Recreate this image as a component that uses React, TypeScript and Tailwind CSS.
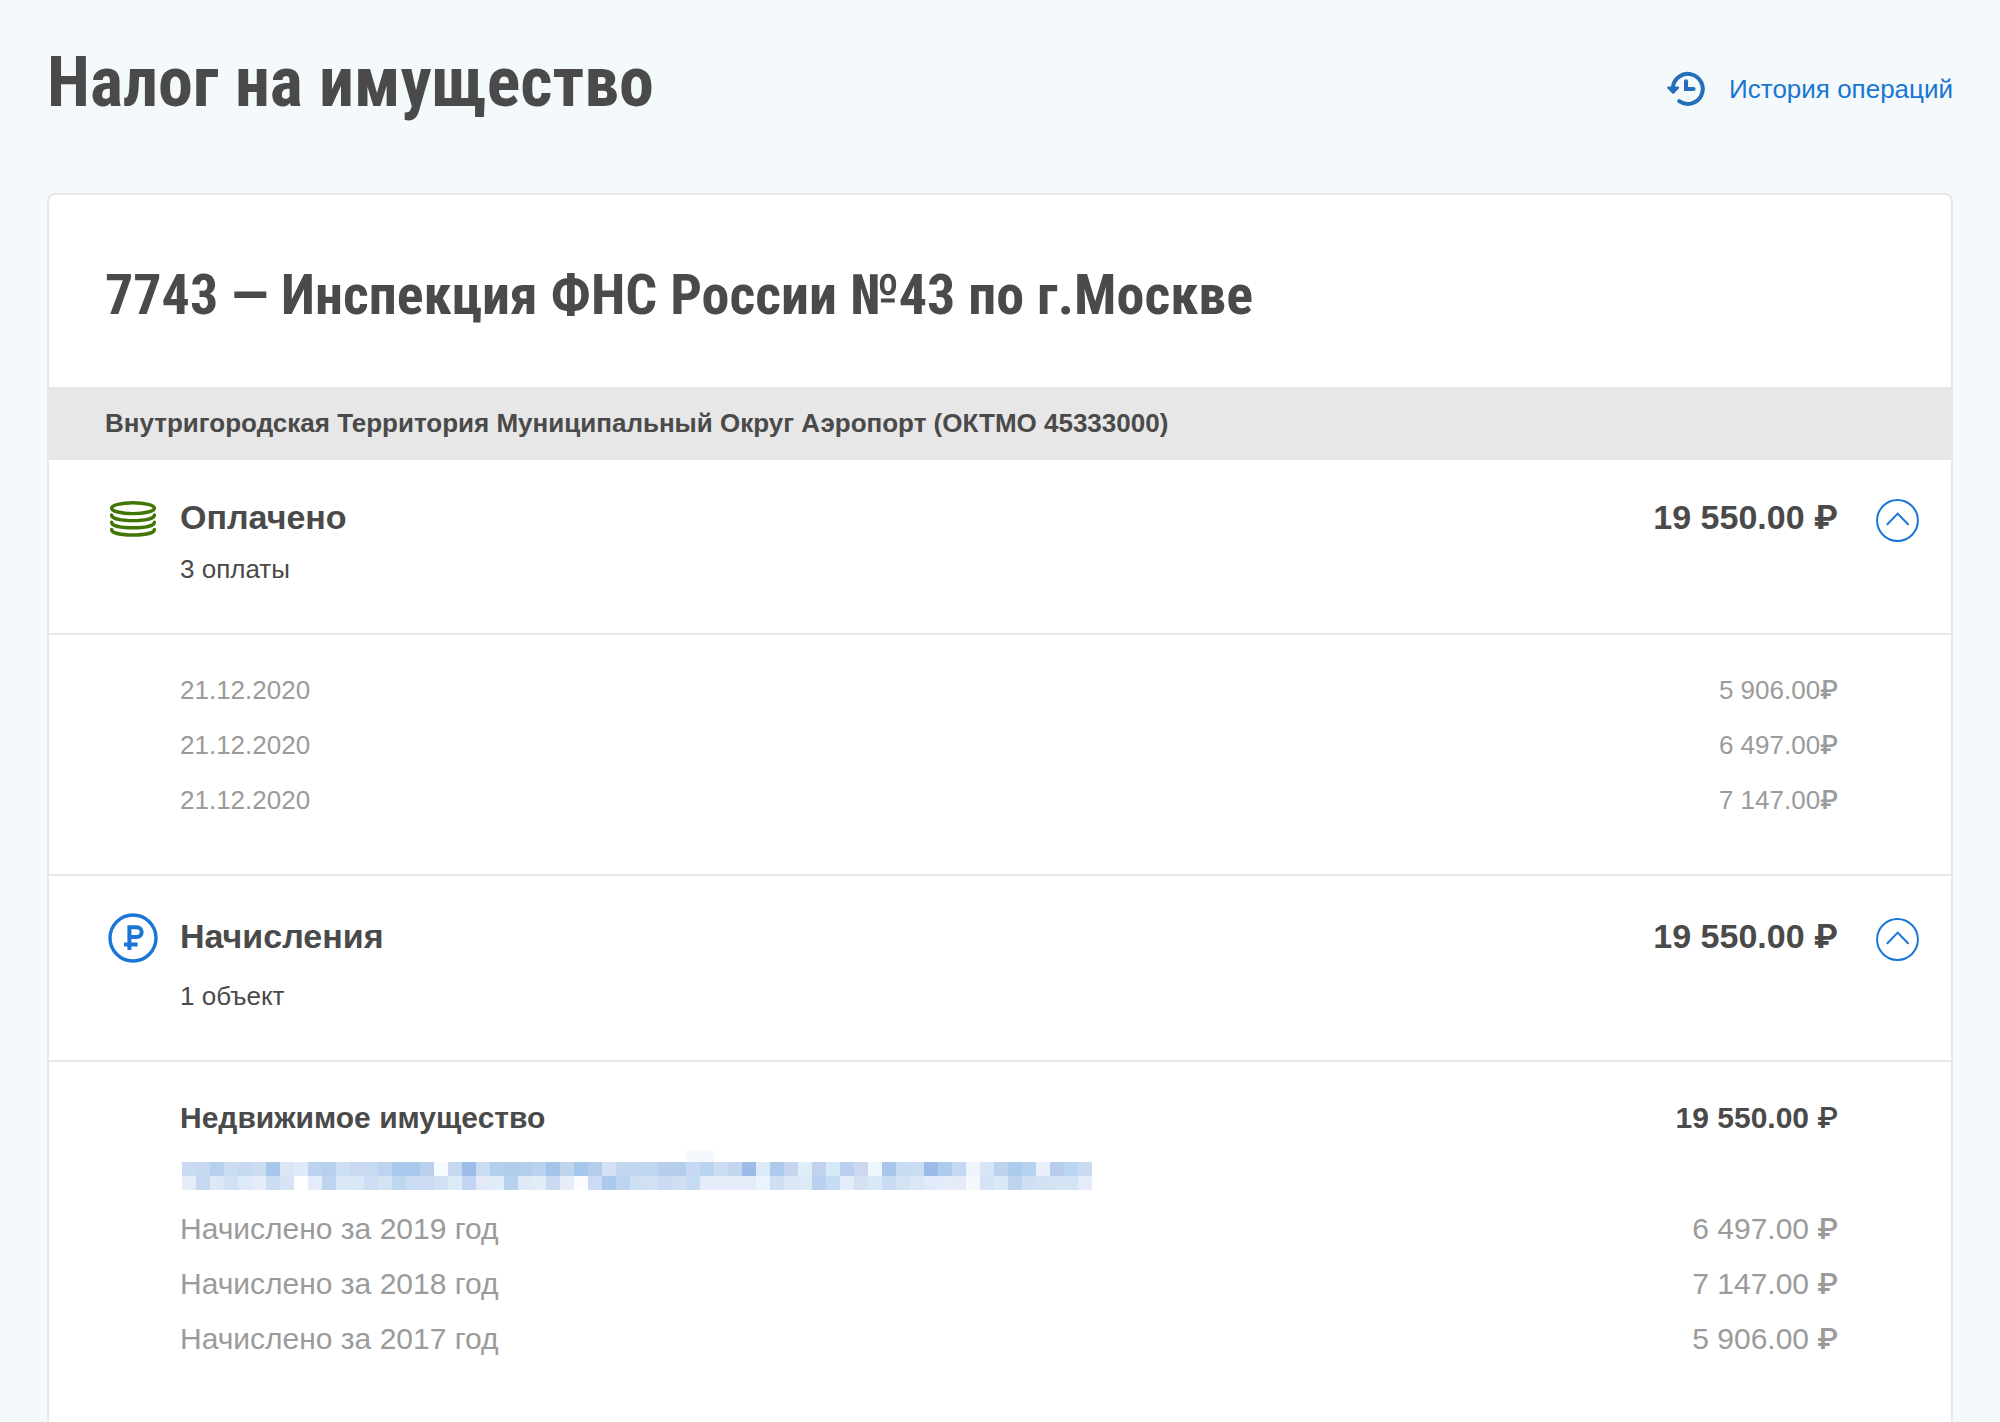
import React, { useState } from 'react';

interface Charge {
  label: string;
  amount: string;
}

const PAYMENTS: Charge[] = [
  { label: '21.12.2020', amount: '5 906.00' },
  { label: '21.12.2020', amount: '6 497.00' },
  { label: '21.12.2020', amount: '7 147.00' },
];

const CHARGES: Charge[] = [
  { label: 'Начислено за 2019 год', amount: '6 497.00' },
  { label: 'Начислено за 2018 год', amount: '7 147.00' },
  { label: 'Начислено за 2017 год', amount: '5 906.00' },
];

// Colours of the mosaic that hides the address, one hex per 14px cell
const MOSAIC_TOP =
  'c9daf1 c7d8f1 b6d1f0 c9dcf2 c7d8f1 ccdcf1 a7c7ed dae5f6 deeaf8 bdd2ef b6d0ed cddff4 c9daf0 c6daf2 bed3ef a9caed a9caed bad0ee f5fbff c6d7ef 9dbde9 cadcf3 b3cfee b0cdec b1ceed bad1ef a4c5ea c1d4ee a4c8ec b6ccec d4e1f5 c3d7ef c2d7ef bed7ee b7ceed b5ceed c5daf2 b8d4ef ccdcf2 c2d6ef 9cbce7 ddebf8 adc9ec c3d5ef dfedf8 c1d2ee d6e9f7 bbd0f0 cbd8f0 edf6fd a9c6eb c8dbf2 c9def3 9bbce8 adccec c5d8f1 eff4fb d6e6f7 bdd2ee adcbec b6d2f1 e9f0fb b8cdec b9d5f1 c9daf1'.split(' ');
const MOSAIC_BOTTOM =
  'e6edf9 c6d8f1 dce8f6 cfe1f2 dceaf8 e5ebf7 cbddf3 d6e3f5 ffffff e4ebf9 bed3f0 d9e7f7 d8e7f5 cdddf4 d2e3f4 bed6ee cbddf4 cadbf3 cfe1f2 dceaf5 c1d4f1 e4e9f7 e0ecf8 b7d2ee deeaf8 e1ecf6 c9dbf2 e6ecf9 fafcff cadbf3 abc9ec bdd4f0 cde0f4 d0e2f2 cbdaf2 cfe0f2 c5dbf2 e5ebf8 e5ebf8 e5ebf8 e5ebf8 eaf4fc cfe0f3 dae7f6 dee9f6 b9d0ef c5ddf4 e5ecf9 d5e0f2 d8e8f6 c9dbf2 d2e4f4 d8e6f6 e0eaf8 e5ebf8 e4ebf7 f5f9fe d5e4f4 d9e8f6 bdd3f0 d0e0f4 d4e1f3 d5e4f5 d3e4f5 e5ecf9'.split(' ');

const HistoryIcon: React.FC = () => (
  <svg width="38" height="36" viewBox="0 0 38 36" fill="none" aria-hidden="true" className="text-[#236fb8]">
    <path d="M5.8 17a15 15 0 1 1 6.4 13.2" stroke="currentColor" strokeWidth="4" strokeLinecap="round" />
    <path d="M1.4 16.6h9.6l-4.8 5z" fill="currentColor" stroke="currentColor" strokeWidth="2.4" strokeLinejoin="round" />
    <path d="M19 10.2v7.8h7.6" stroke="currentColor" strokeWidth="4" strokeLinecap="round" strokeLinejoin="miter" />
  </svg>
);

const CoinsIcon: React.FC = () => (
  <svg width="50" height="36" viewBox="0 0 50 36" fill="none" stroke="#417505" strokeWidth="3.4" strokeLinecap="round" aria-hidden="true">
    <ellipse cx="25" cy="7.2" rx="21.4" ry="5.4" />
    <path d="M3.6 14c0 3.4 9.4 5.6 21.4 5.6s21.4-2.2 21.4-5.6" />
    <path d="M3.6 21.2c0 3.4 9.4 5.6 21.4 5.6s21.4-2.2 21.4-5.6" />
    <path d="M3.6 28.4c0 3.4 9.4 5.6 21.4 5.6s21.4-2.2 21.4-5.6" />
  </svg>
);

const RoubleIcon: React.FC = () => (
  <svg width="50" height="50" viewBox="0 0 50 50" fill="none" stroke="#1976d6" strokeWidth="3.4" aria-hidden="true">
    <circle cx="25" cy="25" r="23" />
    <path d="M21.4 37V14.2h7.4a4.9 4.9 0 0 1 0 9.8h-7.4M16 31.4h13.6" strokeWidth="4" />
  </svg>
);

const Rouble: React.FC<{ className?: string }> = ({ className = '' }) => (
  <span className={`font-[Roboto,sans-serif] ${className}`}>₽</span>
);

const ToggleButton: React.FC<{ open: boolean; label: string; onClick: () => void }> = ({ open, label, onClick }) => (
  <button
    type="button"
    onClick={onClick}
    aria-expanded={open}
    aria-label={label}
    className="ml-[38px] mt-0.5 shrink-0 cursor-pointer"
  >
    <svg
      width="43"
      height="43"
      viewBox="0 0 43 43"
      fill="none"
      stroke="#1976d6"
      strokeWidth="2"
      strokeLinecap="round"
      className={open ? '' : 'rotate-180'}
    >
      <circle cx="21.5" cy="21.5" r="20.4" />
      <path d="M11.4 25.2l10.3-10.6L32 25.2" />
    </svg>
  </button>
);

interface SectionHeaderProps {
  icon: React.ReactNode;
  title: string;
  note: string;
  open: boolean;
  className: string;
  noteClassName: string;
  onToggle: () => void;
}

const SectionHeader: React.FC<SectionHeaderProps> = ({ icon, title, note, open, className, noteClassName, onToggle }) => (
  <div className={`flex items-start border-b-2 border-[#e7e7e7] pl-14 pr-8 pb-12 ${className}`}>
    <div className="flex h-11 w-[75px] shrink-0 items-center pl-[3px]">{icon}</div>
    <div className="flex-1">
      <h3 className="text-[34px] font-bold leading-10">{title}</h3>
      <p className={`text-[26px] leading-8 ${noteClassName}`}>{note}</p>
    </div>
    <p className="text-[34px] font-bold leading-10">
      19 550.00 <Rouble />
    </p>
    <ToggleButton open={open} label={title} onClick={onToggle} />
  </div>
);

const App: React.FC = () => {
  const [paidOpen, setPaidOpen] = useState(true);
  const [chargedOpen, setChargedOpen] = useState(true);

  return (
    <div className={'flex min-h-screen flex-col bg-[#f4f9fc] px-[47px] text-[#4a4a4a] font-["Liberation_Sans",Arial,sans-serif]'}>
      <header className="mb-[69px] flex items-start justify-between pt-10">
        <h1 className={'text-[70px] font-bold leading-[84px] font-["Roboto_Condensed",Roboto,sans-serif]'}>
          Налог на имущество
        </h1>
        <a href="#history" className="mt-[31px] flex items-center gap-6 text-[26px] leading-[34px] text-[#1976d2]">
          <HistoryIcon />
          История операций
        </a>
      </header>

      <main className="flex-1 rounded-t-lg border-2 border-b-0 border-[#e6e8ea] bg-white">
        <h2 className={'px-14 pb-[60px] pt-[68px] text-[56px] font-bold leading-[64px] font-["Roboto_Condensed",Roboto,sans-serif]'}>
          7743 — Инспекция ФНС России №43 по г.Москве
        </h2>
        <p className="bg-[#e7e7e7] px-14 py-5 text-[26px] font-bold leading-[33px]">
          Внутригородская Территория Муниципальный Округ Аэропорт (ОКТМО 45333000)
        </p>

        <section>
          <SectionHeader
            icon={<CoinsIcon />}
            title="Оплачено"
            note="3 оплаты"
            open={paidOpen}
            className="pt-[37px]"
            noteClassName="mt-4"
            onToggle={() => setPaidOpen(!paidOpen)}
          />
          {paidOpen && (
            <div className="border-b-2 border-[#e7e7e7] pb-[46px] pl-[131px] pr-[113px] pt-7">
              <table className="w-full text-[26px] leading-[55px] text-[#9b9b9b]">
                <tbody>
                  {PAYMENTS.map((item) => (
                    <tr key={item.amount}>
                      <td>{item.label}</td>
                      <td className="text-right">
                        {item.amount}
                        <Rouble className="font-medium" />
                      </td>
                    </tr>
                  ))}
                </tbody>
              </table>
            </div>
          )}
        </section>

        <section>
          <SectionHeader
            icon={<RoubleIcon />}
            title="Начисления"
            note="1 объект"
            open={chargedOpen}
            className="pt-10"
            noteClassName="mt-6"
            onToggle={() => setChargedOpen(!chargedOpen)}
          />
          {chargedOpen && (
            <div className="pl-[131px] pr-[113px] pt-9">
              <div className="flex justify-between text-[30px] font-bold leading-10">
                <h4>Недвижимое имущество</h4>
                <p>
                  19 550.00 <Rouble className="font-medium" />
                </p>
              </div>
              <svg width="912" height="40" viewBox="0 0 912 40" className="mt-3" shapeRendering="crispEdges" aria-hidden="true">
                <rect x="506" y="0" width="28" height="12" fill="#f5f9fd" />
                {MOSAIC_TOP.map((hex, i) => (
                  <rect key={i} x={2 + i * 14} y="12" width="14" height="14" fill={`#${hex}`} />
                ))}
                {MOSAIC_BOTTOM.map((hex, i) => (
                  <rect key={i} x={2 + i * 14} y="26" width="14" height="14" fill={`#${hex}`} />
                ))}
              </svg>
              <table className="mt-[11px] w-full text-[30px] leading-[55px] text-[#9b9b9b]">
                <tbody>
                  {CHARGES.map((item) => (
                    <tr key={item.amount}>
                      <td>{item.label}</td>
                      <td className="text-right">
                        {item.amount} <Rouble className="font-medium" />
                      </td>
                    </tr>
                  ))}
                </tbody>
              </table>
            </div>
          )}
        </section>
      </main>
    </div>
  );
};

export default App;
